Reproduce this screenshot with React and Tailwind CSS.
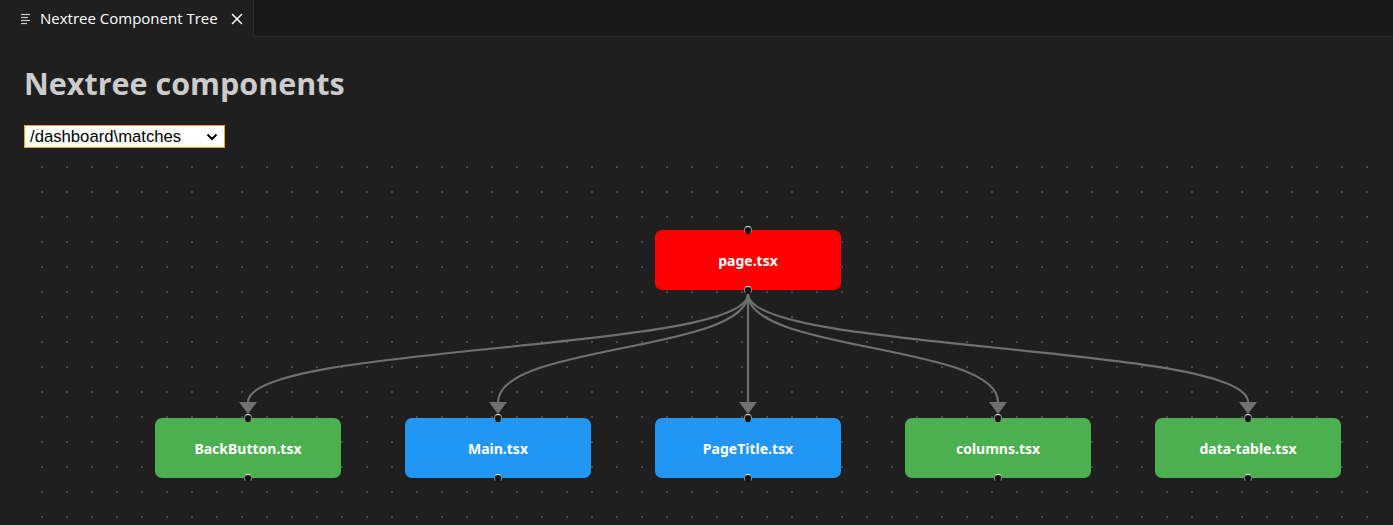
import React from "react";

const nodes = [
  { label: "BackButton.tsx", x: 131, color: "bg-[#4caf50]" },
  { label: "Main.tsx", x: 381, color: "bg-[#2196f3]" },
  { label: "PageTitle.tsx", x: 631, color: "bg-[#2196f3]" },
  { label: "columns.tsx", x: 881, color: "bg-[#4caf50]" },
  { label: "data-table.tsx", x: 1131, color: "bg-[#4caf50]" },
];

function Handle({ pos }) {
  return (
    <span
      className={
        "absolute left-1/2 -translate-x-1/2 w-[8px] h-[8px] rounded-full bg-[#151515] border border-t-[#e6e6e6] border-x-[#8a8a8a] border-b-[#151515] " +
        (pos === "top" ? "-top-[4px]" : "-bottom-[4px]")
      }
    />
  );
}

function Node({ label, x, y, color }) {
  return (
    <div
      className={
        "absolute w-[186px] h-[60px] rounded-[7px] flex items-center justify-center text-white font-bold text-[14px] " +
        color
      }
      style={{ left: x, top: y, fontFamily: '"Noto Sans", "Open Sans", sans-serif' }}
    >
      <Handle pos="top" />
      {label}
      <Handle pos="bottom" />
    </div>
  );
}

export default function App() {
  const sx = 724;
  const sy = 134;
  const ty = 242;
  return (
    <div
      className="w-full h-screen bg-[#1f1f1f] flex flex-col overflow-hidden"
      style={{ fontFamily: '"Noto Sans", "Open Sans", sans-serif' }}
    >
      <div className="h-[37px] flex bg-[#181818] shrink-0">
        <div
          className="w-[254px] h-full bg-[#1f1f1f] border-r border-[#2b2b2b] flex items-center pl-[20px] gap-[8px] text-white text-[15px]"
          style={{ fontFamily: '"Open Sans", "Noto Sans", sans-serif' }}
        >
          <svg width="12" height="12" viewBox="0 0 12 12" className="shrink-0">
            <g stroke="#cccccc" strokeWidth="1.2">
              <line x1="1" y1="1.5" x2="10" y2="1.5" />
              <line x1="1" y1="4.5" x2="8" y2="4.5" />
              <line x1="1" y1="7.5" x2="10" y2="7.5" />
              <line x1="1" y1="10.5" x2="7" y2="10.5" />
            </g>
          </svg>
          <span className="whitespace-nowrap">Nextree Component Tree</span>
          <svg width="12" height="12" viewBox="0 0 12 12" className="ml-[5px] shrink-0">
            <g stroke="#ffffff" strokeWidth="1.5" strokeLinecap="round">
              <line x1="1.5" y1="1.5" x2="10.5" y2="10.5" />
              <line x1="10.5" y1="1.5" x2="1.5" y2="10.5" />
            </g>
          </svg>
        </div>
        <div className="flex-1 border-b border-[#2b2b2b]" />
      </div>

      <div className="flex-1 flex flex-col px-[24px] min-h-0">
        <h1
          className="text-[30.5px] font-bold text-[#cccccc] mt-[26px] leading-[40px]"
          style={{ fontFamily: '"Open Sans", "Noto Sans", sans-serif' }}
        >
          Nextree components
        </h1>
        <div
          className="mt-[22px] w-[201px] h-[23px] bg-white border border-[#e8a317] flex items-center justify-between pl-[5px] pr-[6px] text-black text-[16.7px]"
          style={{ fontFamily: '"Liberation Sans", Arial, sans-serif' }}
        >
          <span>/dashboard\matches</span>
          <svg width="12" height="8" viewBox="0 0 12 8">
            <path d="M1.5 1.5 L6 6 L10.5 1.5" fill="none" stroke="#000" strokeWidth="2" />
          </svg>
        </div>

        <div className="relative flex-1 mt-[12px]">
          <svg className="absolute inset-0 w-full h-full">
            <defs>
              <pattern id="dots" x="17" y="6" width="25" height="25" patternUnits="userSpaceOnUse">
                <rect x="0" y="0" width="2" height="2" fill="#4a4a4a" />
              </pattern>
            </defs>
            <rect x="0" y="0" width="100%" height="100%" fill="url(#dots)" />
            {nodes.map((n) => {
              const tx = n.x + 93;
              const c = (ty - sy) / 2 + 4;
              return (
                <g key={n.label}>
                  <path
                    d={`M${sx},${sy} C${sx},${sy + c} ${tx},${ty - c} ${tx},${ty}`}
                    fill="none"
                    stroke="#707070"
                    strokeWidth="2.2"
                  />
                  <polygon
                    points={`${tx - 9},${ty} ${tx + 9},${ty} ${tx},${ty + 12}`}
                    fill="#707070"
                  />
                </g>
              );
            })}
          </svg>
          <Node label="page.tsx" x={631} y={70} color="bg-[#ff0000]" />
          {nodes.map((n) => (
            <Node key={n.label} label={n.label} x={n.x} y={258} color={n.color} />
          ))}
        </div>
      </div>
    </div>
  );
}
